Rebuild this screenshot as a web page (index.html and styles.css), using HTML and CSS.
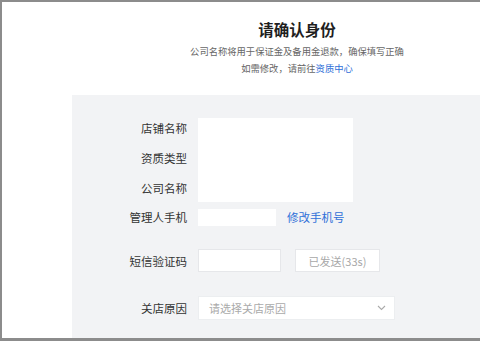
FILE: index.html
```html
<!DOCTYPE html>
<html lang="zh-CN">
<head>
<meta charset="utf-8">
<link rel="stylesheet" href="styles.css">
</head>
<body>
<div class="frame">
  <div class="header">
    <div class="title">请确认身份</div>
    <div class="sub">公司名称将用于保证金及备用金退款，确保填写正确<br>如需修改，请前往<a class="link">资质中心</a></div>
  </div>
  <div class="panel">
    <div class="grid">
      <div class="labels3">
        <div class="label tall">店铺名称</div>
        <div class="label tall">资质类型</div>
        <div class="label tall">公司名称</div>
      </div>
      <div class="infobox"></div>

      <div class="label row-phone">管理人手机</div>
      <div class="ctrl row-phone"><span class="phone"></span><a class="link modify">修改手机号</a></div>

      <div class="label row-sms">短信验证码</div>
      <div class="ctrl row-sms"><span class="code"></span><span class="btn">已发送(33s)</span></div>

      <div class="label row-reason">关店原因</div>
      <div class="ctrl row-reason">
        <div class="select"><span>请选择关店原因</span>
          <svg width="9" height="6" viewBox="0 0 9 6"><path d="M1 1l3.5 3.5L8 1" fill="none" stroke="#aaa" stroke-width="1.1"/></svg>
        </div>
      </div>
    </div>
  </div>
</div>
</body>
</html>
```
FILE: styles.css
```css
* { box-sizing: border-box; }
html, body { margin: 0; padding: 0; background: #fff; }
body { font-family: "Noto Sans CJK SC", "Noto Sans", sans-serif; color: #333; }
.frame {
  width: 480px; height: 341px;
  border-top: 2px solid #8c8c8c;
  border-left: 2px solid #8c8c8c;
  border-bottom: 3px solid #8c8c8c;
  display: flex; flex-direction: column;
  overflow: hidden;
}
.header { margin-left: 112px; padding-top: 16px; text-align: center; }
.title { font-size: 15.5px; font-weight: 700; line-height: 22px; color: #1f1f1f; }
.sub { margin-top: 3px; font-size: 9.3px; line-height: 17px; color: #666; }
.link { color: #2e6fd8; text-decoration: none; }
.panel {
  margin-top: 18px; margin-left: 70px; flex: 1;
  background: #f2f3f5; padding-top: 18px;
}
.grid { display: grid; grid-template-columns: 115px 1fr; column-gap: 11px; }
.label { font-size: 11.5px; color: #333; text-align: right; display: flex; align-items: center; justify-content: flex-end; }
.label.tall { height: 30px; }
.infobox { margin-top: 5px; width: 155px; height: 84px; background: #fff; }
.ctrl { display: flex; align-items: center; }
.row-phone { height: 28px; }
.phone { width: 78px; height: 17px; background: #fff; }
.modify { margin-left: 11px; font-size: 11.5px; }
.row-sms { height: 23px; margin-top: 18px; }
.code { width: 83px; height: 23px; background: #fff; border: 1px solid #e6e7ea; }
.btn { margin-left: 14px; width: 85px; height: 23px; background: #fff; border: 1px solid #e6e7ea; font-size: 11px; color: #a8a8a8; display: flex; align-items: center; justify-content: center; }
.row-reason { height: 24px; margin-top: 24px; }
.select { width: 197px; height: 24px; background: #fff; border: 1px solid #eceef0; display: flex; align-items: center; justify-content: space-between; padding: 0 8px 0 10px; font-size: 11px; color: #aaa; }
```
